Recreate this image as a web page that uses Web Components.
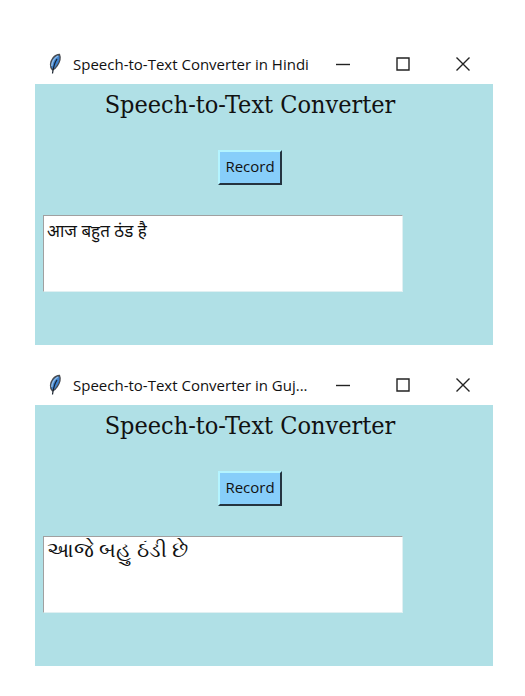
<!DOCTYPE html>
<html lang="en">
<head>
<meta charset="utf-8">
<meta name="viewport" content="width=device-width, initial-scale=1">
<title>Speech-to-Text Converter</title>
<style>
  body { margin: 0; background: #fff; font-family: "Noto Sans", "Open Sans", sans-serif; color: #111; }
  main { display: flex; flex-direction: column; gap: 20px; padding: 44px 32px 30px 35px; }
</style>
</head>
<body>
<main>
  <app-window caption="Speech-to-Text Converter in Hindi">
    <speech-converter lang="hi" text="आज बहुत ठंड है"></speech-converter>
  </app-window>
  <app-window caption="Speech-to-Text Converter in Guj...">
    <speech-converter lang="gu" text="આજે બહુ ઠંડી છે"></speech-converter>
  </app-window>
</main>

<template id="window-template">
  <style>
    :host { display: block; background: #fff; }
    header { display: flex; align-items: center; height: 40px; padding-left: 12px; }
    .feather { flex: none; width: 16px; height: 22px; }
    .caption { flex: 1; min-width: 0; margin-left: 10px; overflow: hidden; white-space: nowrap; font: 15px/20px "Open Sans", "Noto Sans", sans-serif; }
    .controls { display: flex; flex: none; }
    button { display: flex; align-items: center; justify-content: center; width: 60px; height: 40px; padding: 0; border: 0; background: none; color: #222; }
    button svg { width: 14px; height: 14px; fill: none; stroke: currentColor; stroke-width: 1.4; }
  </style>
  <header>
    <svg class="feather" viewBox="0 0 16 22" aria-hidden="true">
      <path d="M5.500 17 C2.500 14 3 9 6 5 C8 2.500 10 1.500 12.500 1.500 C14 5 12.500 9.500 10 13 C8.500 15.500 7 16.500 5.500 17Z" fill="#3f83cf" stroke="#4a4c50" stroke-width="1.300"/>
      <path d="M4.800 13 C5 9 7.500 5 11 3" fill="none" stroke="#8fbbe6" stroke-width="1.400"/>
      <path d="M10 6 C8 9 6.500 13 5.500 20.500" fill="none" stroke="#17202c" stroke-width="1.200"/>
    </svg>
    <span class="caption"></span>
    <div class="controls">
      <button type="button" aria-label="Minimize"><svg viewBox="0 0 14 14"><path d="M0 7.500H14"/></svg></button>
      <button type="button" aria-label="Maximize"><svg viewBox="0 0 14 14"><path d="M1 1H13V13H1Z"/></svg></button>
      <button type="button" aria-label="Close"><svg viewBox="0 0 14 14"><path d="M.5 .5L13.500 13.500M13.500 .5L.5 13.500"/></svg></button>
    </div>
  </header>
  <slot></slot>
</template>

<template id="converter-template">
  <style>
    :host { display: block; padding: 4px 36px 53px 8px; background: #b0e0e6; }
    h1 { margin: 0; text-align: center; white-space: nowrap; font: 25px/34px "DejaVu Serif Condensed", "DejaVu Serif", serif; }
    button { display: block; width: 64px; height: 35px; margin: 28px auto 30px; padding: 0 0 3px; border: 2px solid; border-color: #b4f4ff #253440 #253440 #b4f4ff; background: #87cefa; color: #111; font: 15px/20px "Open Sans", "Noto Sans", sans-serif; }
    textarea { display: block; box-sizing: border-box; width: 360px; max-width: 100%; height: 77px; margin: 0; padding: 3px; border: 1px solid; border-color: #a0a0a0 #e0f0f2 #e0f0f2 #a0a0a0; border-radius: 0; outline: 0; resize: none; overflow: hidden; background: #fff; color: #111; font: 17px/24px "Noto Sans", sans-serif; }
    :host([lang="gu"]) textarea { padding-top: 0; font-size: 21px; }
  </style>
  <h1 lang="en">Speech-to-Text Converter</h1>
  <button type="button" lang="en">Record</button>
  <textarea aria-label="Recognized speech"></textarea>
</template>

<script>
  class AppWindow extends HTMLElement {
    constructor() {
      super();
      const root = this.attachShadow({ mode: "open" });
      root.append(document.getElementById("window-template").content.cloneNode(true));
      root.querySelector(".caption").textContent = this.getAttribute("caption");
    }
  }
  class SpeechConverter extends HTMLElement {
    constructor() {
      super();
      const root = this.attachShadow({ mode: "open" });
      root.append(document.getElementById("converter-template").content.cloneNode(true));
      root.querySelector("textarea").value = this.getAttribute("text");
    }
  }
  customElements.define("app-window", AppWindow);
  customElements.define("speech-converter", SpeechConverter);
</script>
</body>
</html>
